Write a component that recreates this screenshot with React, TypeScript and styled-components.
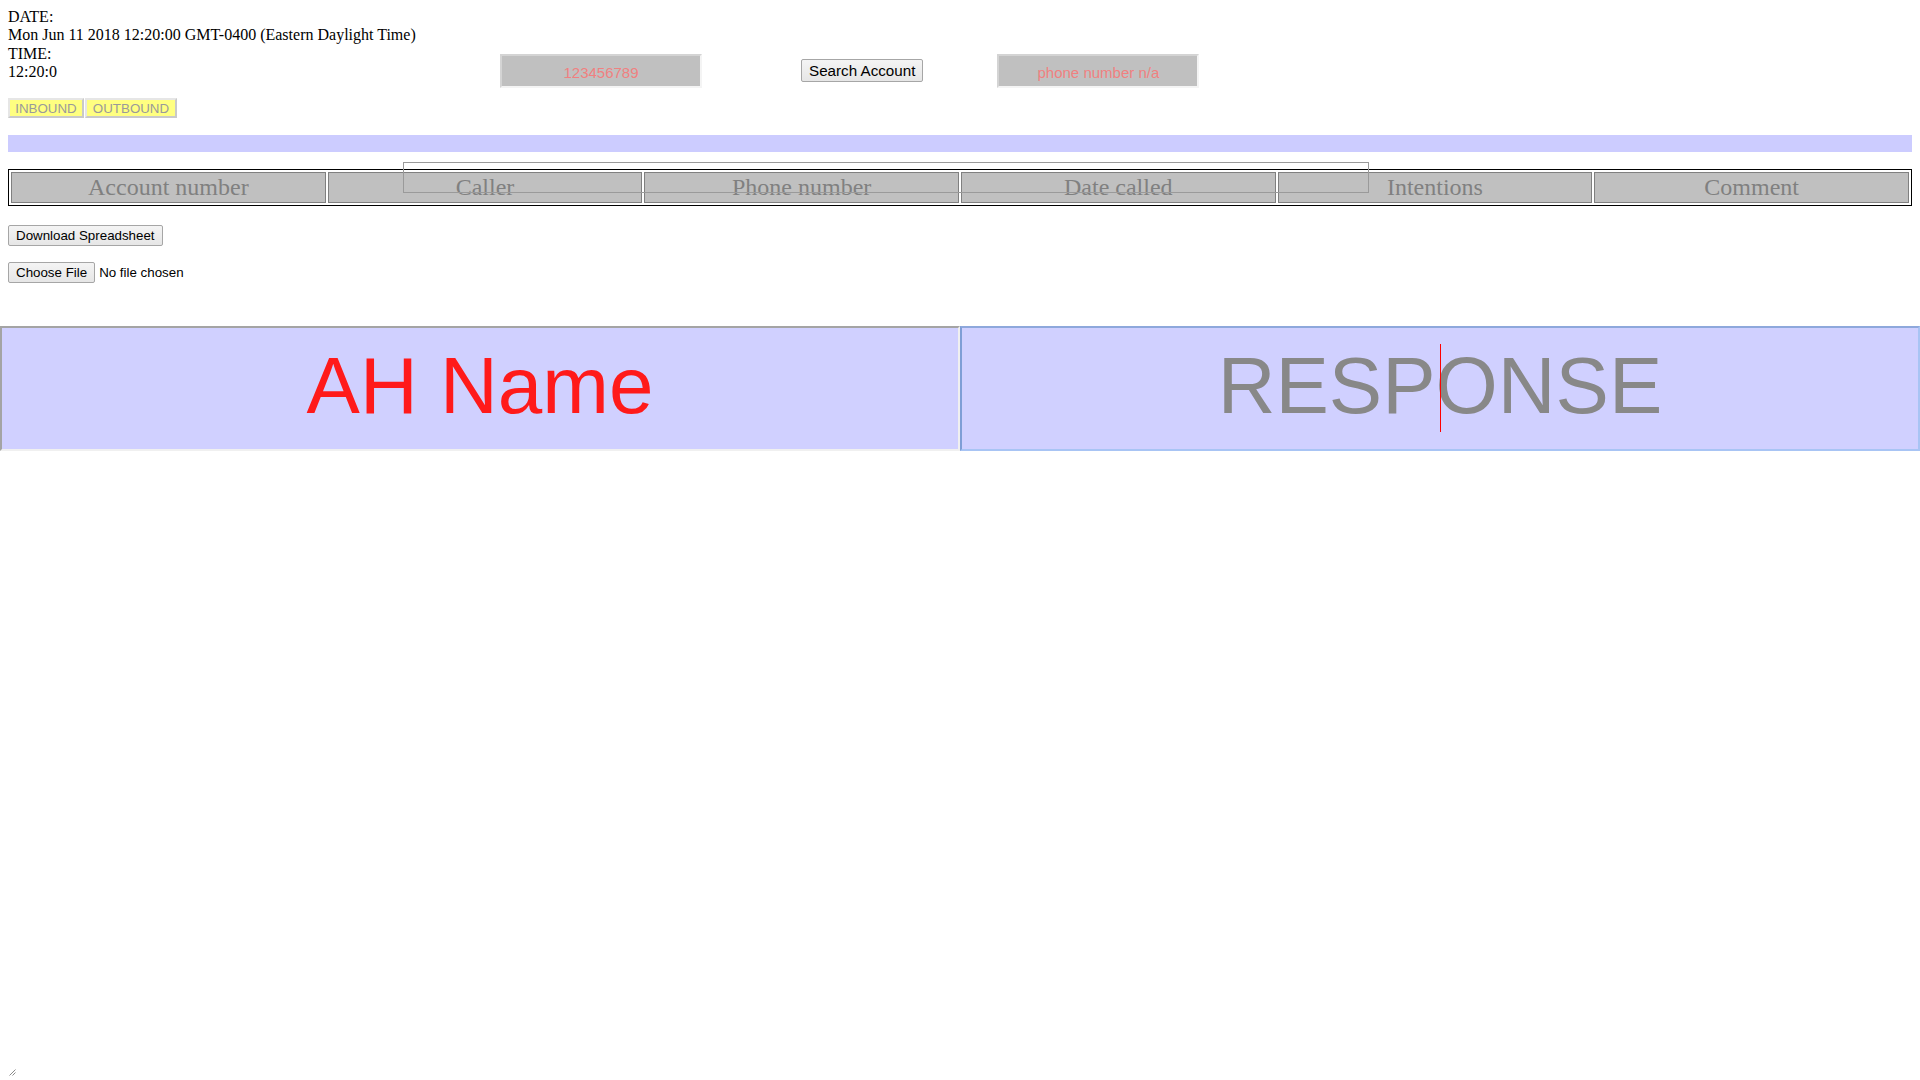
import React from "react";
import styled, { createGlobalStyle } from "styled-components";

const Global = createGlobalStyle`
  html, body { margin: 0; padding: 0; background: #fff; }
  body { font-family: "Liberation Serif", "Times New Roman", serif; font-size: 16px; color: #000; }
`;

const Page = styled.div`
  box-sizing: border-box;
  min-height: 100vh;
  width: 100%;
  padding: 8px;
  display: flex;
  flex-direction: column;
  position: relative;
`;

const Header = styled.div`
  display: flex;
  align-items: flex-start;
`;

const DateBlock = styled.div`
  width: 492px;
  line-height: 18.4px;
`;

const ReadOut = styled.input`
  box-sizing: border-box;
  width: 202px;
  height: 34px;
  margin-top: 46px;
  margin-left: ${(p: { $ml?: number }) => p.$ml ?? 0}px;
  background: #c0c0c0;
  border-style: solid;
  border-width: 2px;
  border-color: #d4d4d4 #f4f4f4 #f4f4f4 #d4d4d4;
  font-family: "Liberation Sans", Arial, sans-serif;
  font-size: 15px;
  text-align: center;
  padding: 0;
  padding-top: 2px;
  &::placeholder { color: #f08080; opacity: 1; }
`;

const PushButton = styled.button<{ $ml?: number; $mt?: number; $fs?: number; $h?: number }>`
  box-sizing: border-box;
  height: ${(p) => p.$h ?? 21}px;
  margin-left: ${(p) => p.$ml ?? 0}px;
  margin-top: ${(p) => p.$mt ?? 0}px;
  background: linear-gradient(#f4f4f4, #e6e6e6);
  border: 1px solid #a6a6a6;
  border-radius: 2px;
  font-family: "Liberation Sans", Arial, sans-serif;
  font-size: ${(p) => p.$fs ?? 13.33}px;
  color: #000;
  padding: 0 7px;
  line-height: normal;
`;

const ModeRow = styled.div`
  display: flex;
  gap: 1px;
  margin-top: 10px;
`;

const ModeButton = styled.button`
  box-sizing: border-box;
  height: 20px;
  background: #ffff80;
  border-style: solid;
  border-width: 2px;
  border-color: #e6e6e6 #c9c9c9 #c9c9c9 #e6e6e6;
  font-family: "Liberation Sans", Arial, sans-serif;
  font-size: 13.33px;
  color: #9a9a9a;
  padding: 0 5px;
  width: ${(p: { $w: number }) => p.$w}px;
`;

const Bar = styled.div`
  height: 17px;
  background: #ccccff;
  margin-top: 17px;
`;

const TableWrap = styled.div`
  position: relative;
  margin-top: 17px;
`;

const Table = styled.table`
  width: 100%;
  border: 1px solid #000;
  border-spacing: 2px;
  table-layout: fixed;
`;

const Th = styled.th`
  background: #c0c0c0;
  border: 1px solid #808080;
  color: #808080;
  font-family: "Liberation Serif", "Times New Roman", serif;
  font-weight: normal;
  font-size: 24px;
  padding: 1px;
  line-height: 27px;
`;

const Overlay = styled.div`
  position: absolute;
  left: 395px;
  top: -7px;
  width: 964px;
  height: 29px;
  border: 1px solid #9a9a9a;
  pointer-events: none;
`;

const FileRow = styled.div`
  display: flex;
  align-items: center;
  margin-top: 16px;
  font-family: "Liberation Sans", Arial, sans-serif;
  font-size: 13.33px;
`;

const FileName = styled.span`
  margin-left: 4px;
`;

const Panels = styled.div`
  display: flex;
  margin: 43px -8px 0;
`;

const PanelBox = styled.div`
  position: relative;
  flex: 1 1 0;
  min-width: 0;
  display: flex;
`;

const PanelInput = styled.input<{ $color: string; $focus?: boolean }>`
  box-sizing: border-box;
  width: 100%;
  min-width: 0;
  height: 125px;
  background: #d0d0ff;
  border-style: solid;
  border-width: 2px;
  border-color: ${(p) =>
    p.$focus ? "#8ea8dc #a8c4f4 #a8c4f4 #7f9ed6" : "#a4a4a4 #f0f0f0 #f0f0f0 #a4a4a4"};
  font-family: "Liberation Sans", Arial, sans-serif;
  font-size: 80px;
  text-align: center;
  padding: 0 0 5px;
  outline: none;
  &::placeholder { color: ${(p) => p.$color}; opacity: 1; }
`;

const Caret = styled.span`
  position: absolute;
  left: 50%;
  top: 18px;
  width: 1px;
  height: 88px;
  background: #ff0000;
`;

const Grip = styled.div`
  margin-top: auto;
  margin-bottom: -4px;
  height: 8px;
  display: flex;
  align-items: flex-end;
`;

const headers = ["Account number", "Caller", "Phone number", "Date called", "Intentions", "Comment"];

export default function App() {
  return (
    <>
      <Global />
      <Page>
        <Header>
          <DateBlock>
            DATE:
            <br />
            Mon Jun 11 2018 12:20:00 GMT-0400 (Eastern Daylight Time)
            <br />
            TIME:
            <br />
            12:20:0
          </DateBlock>
          <ReadOut placeholder="123456789" readOnly />
          <PushButton $ml={99} $mt={51} $fs={15.2} $h={23}>Search Account</PushButton>
          <ReadOut $ml={74} placeholder="phone number n/a" readOnly />
        </Header>
        <ModeRow>
          <ModeButton $w={76}>INBOUND</ModeButton>
          <ModeButton $w={92}>OUTBOUND</ModeButton>
        </ModeRow>
        <Bar />
        <TableWrap>
          <Table>
            <thead>
              <tr>
                {headers.map((h) => (
                  <Th key={h}>{h}</Th>
                ))}
              </tr>
            </thead>
          </Table>
          <Overlay />
        </TableWrap>
        <div>
          <PushButton $mt={19}>Download Spreadsheet</PushButton>
        </div>
        <FileRow>
          <PushButton>Choose File</PushButton>
          <FileName>No file chosen</FileName>
        </FileRow>
        <Panels>
          <PanelBox>
            <PanelInput $color="#ff1a1a" placeholder="AH Name" />
          </PanelBox>
          <PanelBox>
            <PanelInput $color="#888888" $focus placeholder="RESPONSE" />
            <Caret />
          </PanelBox>
        </Panels>
        <Grip>
          <svg width="8" height="8" viewBox="0 0 8 8">
            <path d="M1.5 7.5 L7.5 1.5 M4.5 7.5 L7.5 4.5" stroke="#8a8a8a" strokeWidth="1" fill="none" />
          </svg>
        </Grip>
      </Page>
    </>
  );
}
